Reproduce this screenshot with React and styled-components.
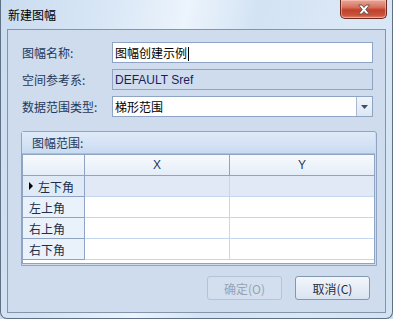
import { Fragment } from 'react';
import styled, { createGlobalStyle } from 'styled-components';

const GlobalStyle = createGlobalStyle`
  html, body {
    margin: 0;
    padding: 0;
    background: #cfdcee;
  }
  * {
    box-sizing: border-box;
  }
`;

const Window = styled.div`
  width: 393px;
  height: 319px;
  display: flex;
  flex-direction: column;
  padding: 0 6px 5px 6px;
  border: 1px solid #5f6f84;
  border-top: none;
  border-radius: 0 0 7px 7px;
  background: linear-gradient(100deg, #cadcf0 0%, #d9e7f6 25%, #ecf4fc 42%, #d3e3f4 58%, #dbe8f6 80%, #d2e2f3 100%);
  font-family: 'Noto Sans CJK SC', 'Liberation Sans', sans-serif;
  font-size: 12px;
`;

const TitleBar = styled.div`
  height: 29px;
  flex-shrink: 0;
  display: flex;
  align-items: center;
  justify-content: space-between;
  position: relative;
`;

const Title = styled.div`
  padding-left: 1px;
  color: #000;
  font-size: 12px;
`;

const CloseButton = styled.div`
  position: absolute;
  top: 0;
  right: -1px;
  width: 47px;
  height: 19px;
  display: flex;
  align-items: center;
  justify-content: center;
  border: 1px solid #6b2a22;
  border-top: none;
  border-radius: 0 0 5px 5px;
  background: linear-gradient(180deg, #e9a797 0%, #d8735f 40%, #c2402a 55%, #c9543c 85%, #e08a70 100%);
  box-shadow: inset 0 0 0 1px rgba(255, 210, 200, 0.5);
`;

const Client = styled.div`
  flex: 1;
  display: flex;
  flex-direction: column;
  border: 1px solid #8394ab;
  background: #cfdcee;
`;

const Form = styled.div`
  display: flex;
  flex-direction: column;
  gap: 6px;
  padding: 12px 12px 0 14px;
`;

const Row = styled.div`
  display: flex;
  align-items: center;
  height: 21px;
`;

const Label = styled.div`
  width: 90px;
  flex-shrink: 0;
  color: #1e395b;
  font-size: 12px;
`;

const Field = styled.div`
  flex: 1;
  height: 21px;
  display: flex;
  align-items: center;
  border: 1px solid #8ea4c2;
  background: ${(p) => (p.$readonly ? '#cfdcee' : '#fff')};
  color: ${(p) => (p.$readonly ? '#1c1c5e' : '#000')};
  font-family: ${(p) => (p.$latin ? "'Liberation Sans', sans-serif" : "'Noto Sans CJK SC', sans-serif")};
  font-size: 12px;
  padding-left: 2px;
  overflow: hidden;
`;

const FieldText = styled.span`
  flex: 1;
  white-space: nowrap;
`;

const Caret = styled.span`
  display: inline-block;
  width: 1px;
  height: 14px;
  margin-left: 1px;
  background: #000;
  vertical-align: middle;
`;

const DropButton = styled.div`
  width: 16px;
  height: 100%;
  flex-shrink: 0;
  display: flex;
  align-items: center;
  justify-content: center;
  border-left: 1px solid #a9bad0;
  background: linear-gradient(180deg, #f1f5fb 0%, #dde7f3 100%);
`;

const Group = styled.div`
  margin: 14px 8px 0 13px;
  border: 1px solid #8ea4c2;
  border-radius: 3px 3px 0 0;
  padding: 0 1px 1px 0;
  display: flex;
  flex-direction: column;
`;

const GroupHeader = styled.div`
  height: 22px;
  display: flex;
  align-items: center;
  padding-left: 10px;
  border-bottom: 1px solid #a9bfd9;
  background: linear-gradient(180deg, #dfeaf8 0%, #d3e2f4 60%, #c9dbf0 100%);
  color: #1e395b;
  font-size: 12px;
`;

const Grid = styled.div`
  height: 110px;
  border: 1px solid #8ea4c2;
  background: #fff;
  display: grid;
  grid-template-columns: 62px 145px 144px;
  grid-template-rows: repeat(5, 21px);
  align-content: start;
`;

const HeadCell = styled.div`
  display: flex;
  align-items: center;
  justify-content: center;
  border-bottom: 1px solid #8ea4c2;
  border-right: ${(p) => (p.$last ? 'none' : '1px solid #8ea4c2')};
  background: linear-gradient(180deg, #f7fafd 0%, #e4edf8 100%);
  color: #1e395b;
  font-family: 'Liberation Sans', sans-serif;
  font-size: 12px;
`;

const RowHead = styled.div`
  display: flex;
  align-items: center;
  padding-left: 6px;
  gap: 5px;
  border-right: 1px solid #8ea4c2;
  border-bottom: 1px solid #8ea4c2;
  background: ${(p) => (p.$current ? '#e0eaf6' : '#e9f1fb')};
  color: #1e2e48;
  font-size: 12px;
`;

const Cell = styled.div`
  border-bottom: 1px solid #c3d7f0;
  border-right: ${(p) => (p.$last ? 'none' : '1px solid #c3d7f0')};
  background: ${(p) => (p.$current ? '#e0e9f5' : '#fff')};
`;

const Buttons = styled.div`
  display: flex;
  justify-content: flex-end;
  gap: 13px;
  margin-top: 10px;
  padding-right: 15px;
`;

const Button = styled.div`
  width: 75px;
  height: 24px;
  display: flex;
  align-items: center;
  justify-content: center;
  border-radius: 3px;
  font-size: 12px;
  border: 1px solid ${(p) => (p.$disabled ? '#b3c3d8' : '#8497b0')};
  background: ${(p) =>
    p.$disabled ? '#d3dfef' : 'linear-gradient(180deg, #f3f6fb 0%, #e6edf6 50%, #d9e3f0 100%)'};
  color: ${(p) => (p.$disabled ? '#97a3b3' : '#1e2e48')};
`;

const rows = ['左下角', '左上角', '右上角', '右下角'];

const App = () => {
  return (
    <>
      <GlobalStyle />
      <Window>
        <TitleBar>
          <Title>新建图幅</Title>
          <CloseButton>
            <svg width="14" height="11" viewBox="0 0 14 11">
              <path
                d="M1.5 1 L5 1 L7 3.5 L9 1 L12.5 1 L8.8 5.5 L12.5 10 L9 10 L7 7.5 L5 10 L1.5 10 L5.2 5.5 Z"
                fill="#fff"
                stroke="#5a4a48"
                strokeWidth="0.9"
                strokeLinejoin="round"
              />
            </svg>
          </CloseButton>
        </TitleBar>
        <Client>
          <Form>
            <Row>
              <Label>图幅名称:</Label>
              <Field>
                <FieldText>
                  图幅创建示例
                  <Caret />
                </FieldText>
              </Field>
            </Row>
            <Row>
              <Label>空间参考系:</Label>
              <Field $readonly $latin>
                <FieldText>DEFAULT Sref</FieldText>
              </Field>
            </Row>
            <Row>
              <Label>数据范围类型:</Label>
              <Field>
                <FieldText>梯形范围</FieldText>
                <DropButton>
                  <svg width="7" height="4" viewBox="0 0 7 4">
                    <path d="M0 0 L7 0 L3.5 4 Z" fill="#3e4e66" />
                  </svg>
                </DropButton>
              </Field>
            </Row>
          </Form>
          <Group>
            <GroupHeader>图幅范围:</GroupHeader>
            <Grid>
              <HeadCell />
              <HeadCell>X</HeadCell>
              <HeadCell $last>Y</HeadCell>
              {rows.map((name, i) => (
                <Fragment key={name}>
                  <RowHead $current={i === 0}>
                    {i === 0 && (
                      <svg width="4" height="8" viewBox="0 0 4 8">
                        <path d="M0 0 L4 4 L0 8 Z" fill="#000" />
                      </svg>
                    )}
                    {name}
                  </RowHead>
                  <Cell $current={i === 0} />
                  <Cell $current={i === 0} $last />
                </Fragment>
              ))}
            </Grid>
          </Group>
          <Buttons>
            <Button $disabled>确定(O)</Button>
            <Button>取消(C)</Button>
          </Buttons>
        </Client>
      </Window>
    </>
  );
};

export default App;
